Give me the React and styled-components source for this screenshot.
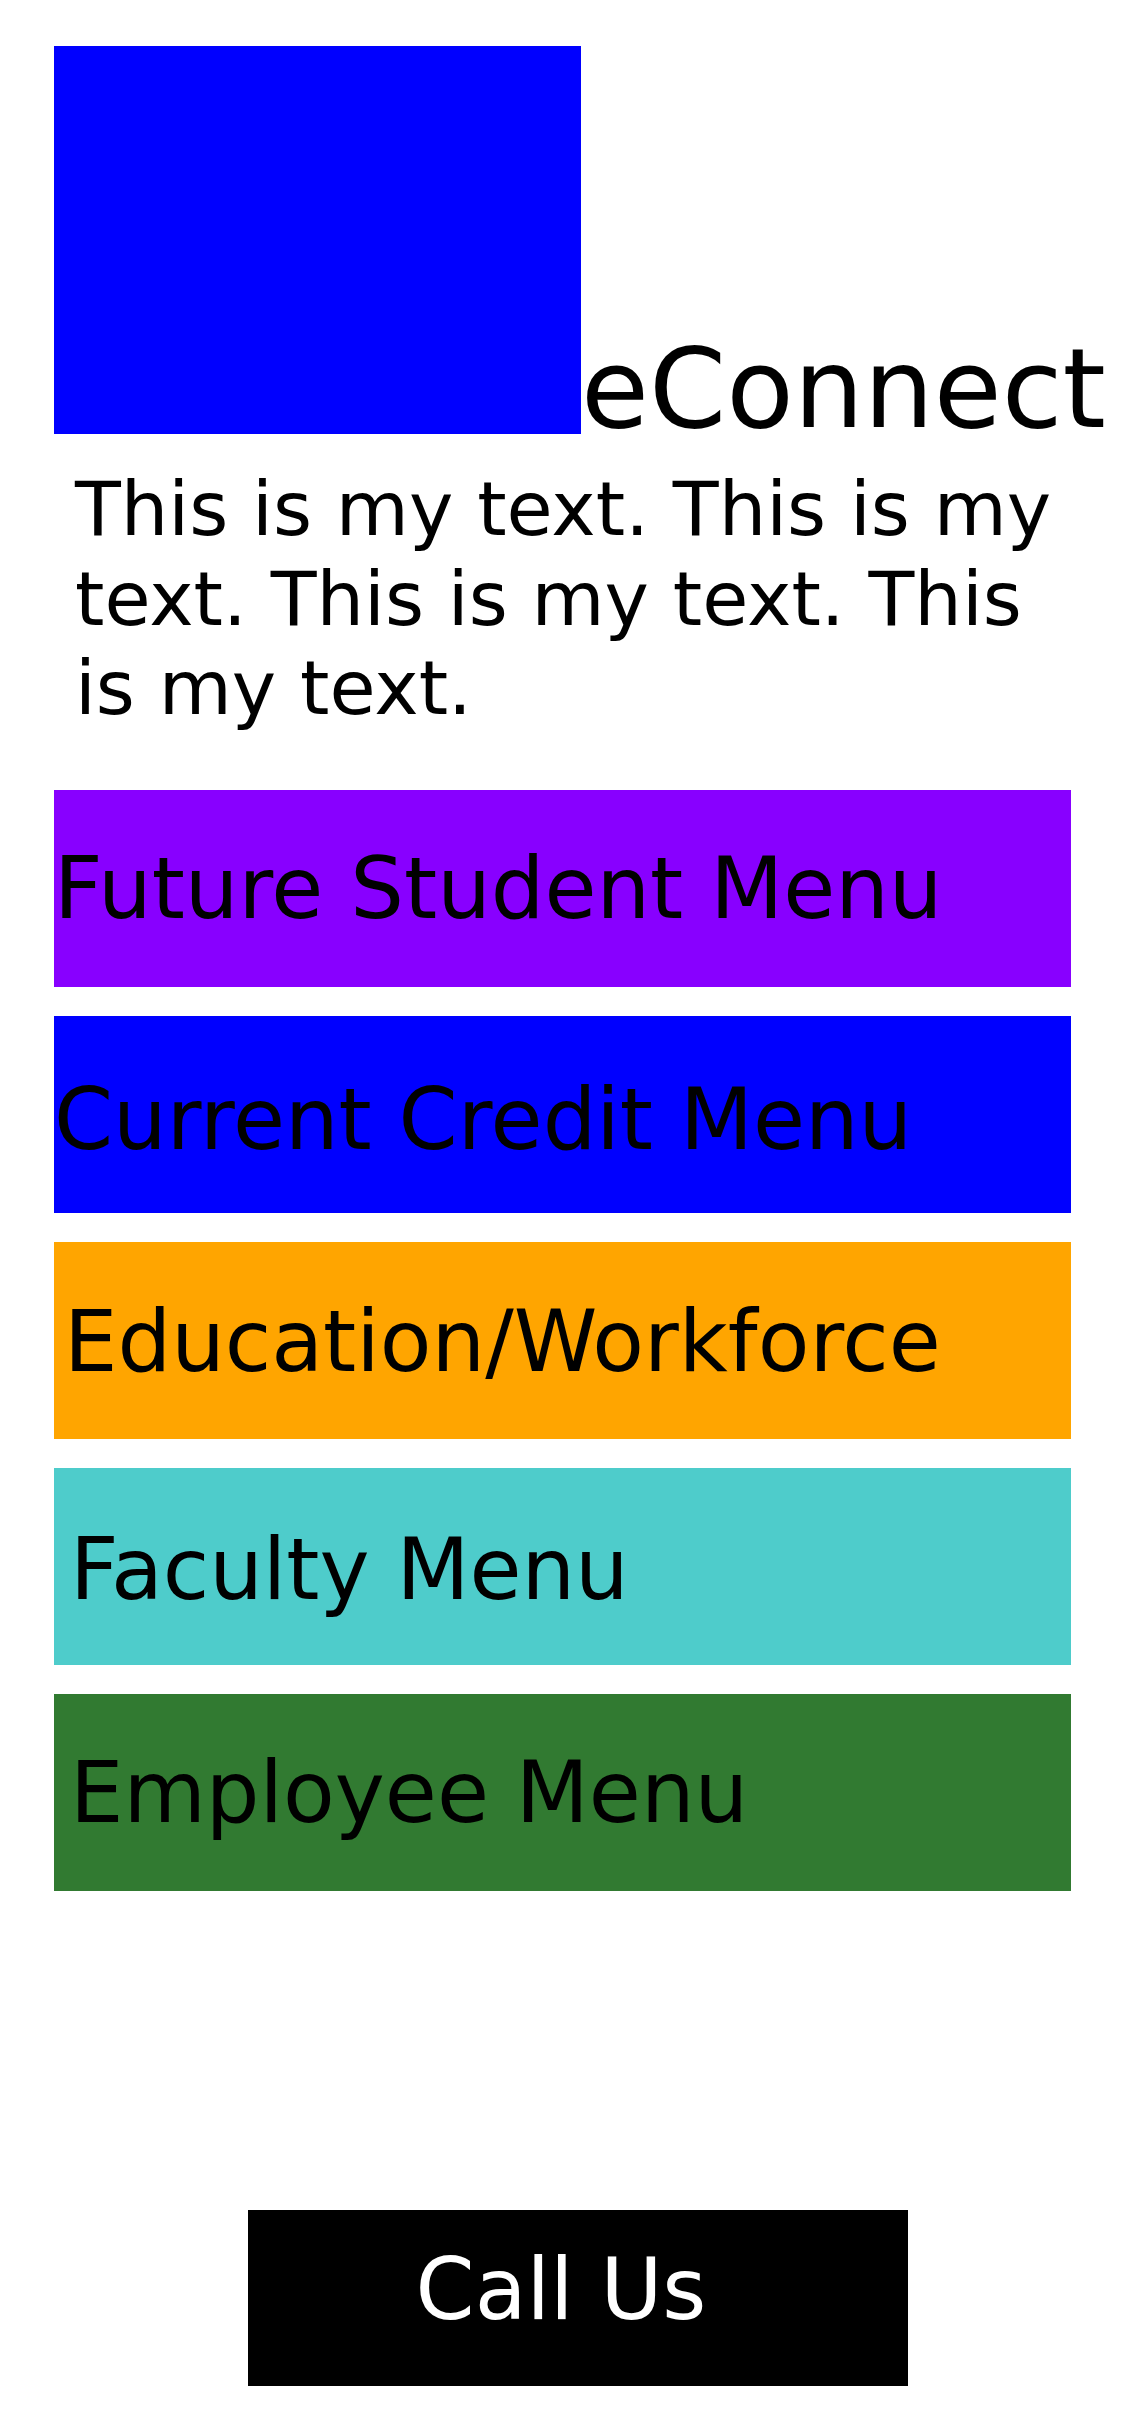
import React from "react";
import styled, { createGlobalStyle } from "styled-components";

const GlobalStyle = createGlobalStyle`
  html, body {
    margin: 0;
    padding: 0;
    background: #ffffff;
  }
  * {
    box-sizing: border-box;
  }
`;

const Page = styled.div`
  min-height: 2436px;
  padding: 46px 54px 0;
  font-family: "DejaVu Sans", "Liberation Sans", sans-serif;
  color: #000000;
`;

const Header = styled.header`
  display: flex;
  align-items: flex-end;
`;

const Logo = styled.div`
  flex: 0 0 527px;
  height: 388px;
  background: #0000ff;
`;

const Title = styled.h1`
  margin: 0;
  font-size: 110.5px;
  font-weight: 400;
  line-height: 90px;
  white-space: nowrap;
`;

const Intro = styled.p`
  margin: 31px 0 0;
  padding-left: 21px;
  font-size: 75px;
  line-height: 89.5px;
`;

const MenuList = styled.nav`
  display: flex;
  flex-direction: column;
  gap: 29px;
  margin-top: 56px;
`;

const MenuItem = styled.a`
  display: flex;
  align-items: center;
  height: 197px;
  padding-left: ${(p) => p.$inset}px;
  padding-top: ${(p) => p.$drop * 2}px;
  background: ${(p) => p.$bg};
  color: #000000;
  font-size: 84.6px;
  line-height: normal;
  text-decoration: none;
  white-space: nowrap;
`;

const Footer = styled.footer`
  display: flex;
  justify-content: center;
  padding-left: 31px;
  margin-top: 319px;
`;

const CallButton = styled.button`
  display: flex;
  align-items: center;
  justify-content: center;
  width: 660px;
  height: 176px;
  padding: 0 34px 16px 0;
  border: 0;
  border-radius: 0;
  background: #000000;
  color: #ffffff;
  font-family: "DejaVu Sans", "Liberation Sans", sans-serif;
  font-size: 84.6px;
  line-height: normal;
`;

const menus = [
  { label: "Future Student Menu", bg: "#8800ff", inset: 0, drop: 0 },
  { label: "Current Credit Menu", bg: "#0000ff", inset: 0, drop: 5 },
  { label: "Education/Workforce", bg: "#ffa500", inset: 10, drop: 1 },
  { label: "Faculty Menu", bg: "#4ecccb", inset: 16, drop: 3 },
  { label: "Employee Menu", bg: "#317a31", inset: 16, drop: 0 },
];

export default function App() {
  return (
    <>
      <GlobalStyle />
      <Page>
        <Header>
          <Logo />
          <Title>eConnect</Title>
        </Header>
        <Intro>
          This is my text. This is my text. This is my text. This is my text.
        </Intro>
        <MenuList>
          {menus.map((m) => (
            <MenuItem
              key={m.label}
              href="#"
              $bg={m.bg}
              $inset={m.inset}
              $drop={m.drop}
            >
              {m.label}
            </MenuItem>
          ))}
        </MenuList>
        <Footer>
          <CallButton type="button">Call Us</CallButton>
        </Footer>
      </Page>
    </>
  );
}
